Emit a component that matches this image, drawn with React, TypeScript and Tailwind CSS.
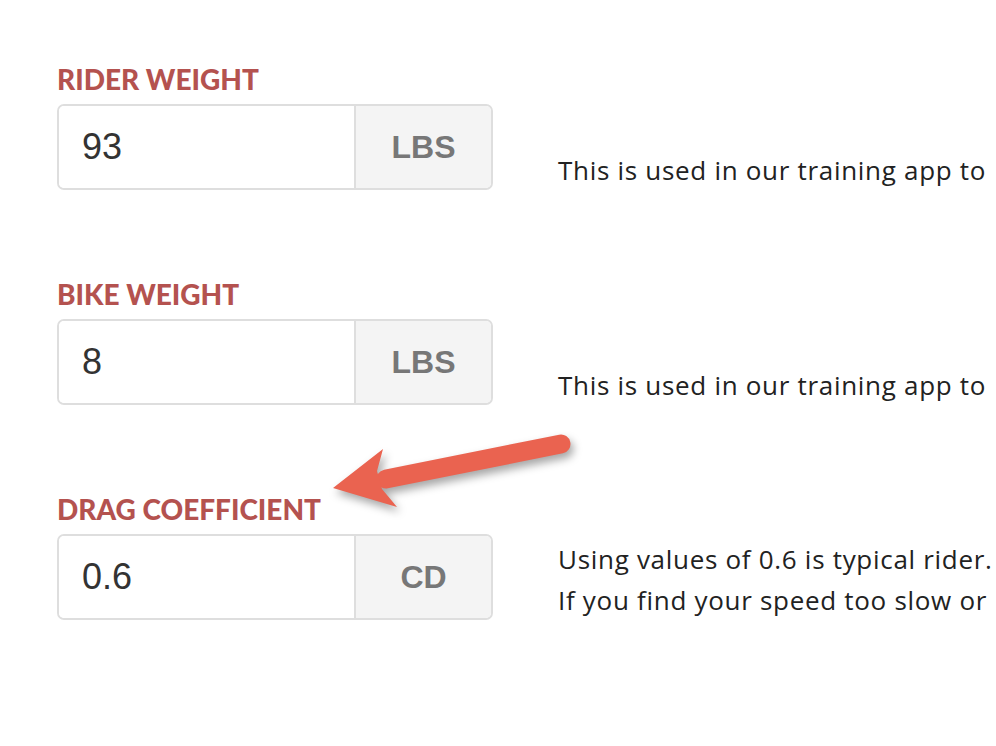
import React from 'react';

interface Field {
  label: string;
  value: string;
  unit: string;
  lines: string[];
  textPad: string;
}

const fields: Field[] = [
  { label: 'Rider Weight', value: '93', unit: 'LBS', lines: ['This is used in our training app to'], textPad: 'pt-[88px]' },
  { label: 'Bike Weight', value: '8', unit: 'LBS', lines: ['This is used in our training app to'], textPad: 'pt-[88px]' },
  {
    label: 'Drag Coefficient',
    value: '0.6',
    unit: 'CD',
    lines: ['Using values of 0.6 is typical rider.', 'If you find your speed too slow or'],
    textPad: 'pt-[47px]',
  },
];

function Arrow() {
  return (
    <svg
      className="absolute left-0 top-0 pointer-events-none drop-shadow-[3px_5px_4px_rgba(0,0,0,0.35)]"
      width="996"
      height="746"
      viewBox="0 0 996 746"
    >
      <line x1="386" y1="479" x2="561" y2="444" stroke="#ea6350" strokeWidth="19" strokeLinecap="round" />
      <polygon points="333,488 383,449 377,471 382,489 397,507" fill="#ea6350" />
    </svg>
  );
}

export default function App() {
  return (
    <div className="relative w-[996px] h-[746px] overflow-hidden bg-white font-['Lato',sans-serif]">
      <div className="pl-[57px] pt-[62px] flex flex-col gap-[86px]">
        {fields.map((f) => (
          <div key={f.label} className="flex items-start">
            {/* champ + libellé */}
            <div className="w-[436px] shrink-0">
              <div className="text-[28px] leading-[34px] font-black uppercase text-[#b4524f] mb-[8px]">
                {f.label}
              </div>
              <div className="flex h-[86px] rounded-[7px] border-2 border-[#dedede] overflow-hidden">
                <div className="flex-1 flex items-center pl-[23px] bg-white text-[36px] text-[#333] font-['Liberation_Sans',Arial,sans-serif]">
                  {f.value}
                </div>
                <div className="w-[137px] flex items-center justify-center bg-[#f4f4f4] border-l-2 border-[#dedede] text-[32px] font-bold text-[#777] font-['Liberation_Sans',Arial,sans-serif]">
                  {f.unit}
                </div>
              </div>
            </div>

            {/* description */}
            <div className={`ml-[65px] ${f.textPad} font-['Open_Sans',sans-serif] text-[26px] leading-[41px] tracking-[0.7px] text-[#222] whitespace-nowrap`}>
              {f.lines.map((l) => (
                <div key={l}>{l}</div>
              ))}
            </div>
          </div>
        ))}
      </div>
      <Arrow />
    </div>
  );
}
